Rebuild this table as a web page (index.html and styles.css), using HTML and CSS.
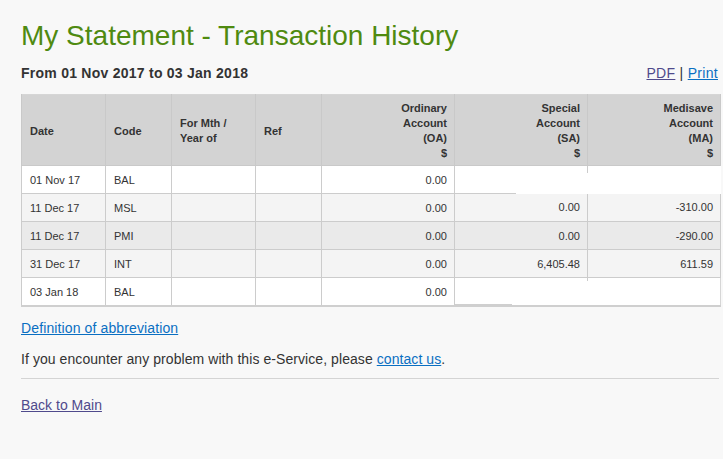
FILE: index.html
```html
<!DOCTYPE html>
<html>
<head>
<meta charset="utf-8">
<link rel="stylesheet" href="styles.css">
</head>
<body>
<div class="page">
  <h1 class="title">My Statement - Transaction History</h1>
  <div class="subbar">
    <h2 class="period">From 01 Nov 2017 to 03 Jan 2018</h2>
    <div class="tools"><a href="#" class="visited">PDF</a> | <a href="#">Print</a></div>
  </div>
  <table class="stmt">
    <colgroup>
      <col class="c-date"><col class="c-code"><col class="c-mth"><col class="c-ref"><col class="c-oa"><col class="c-sa"><col class="c-ma">
    </colgroup>
    <thead>
      <tr>
        <th>Date</th>
        <th>Code</th>
        <th>For Mth / Year of</th>
        <th>Ref</th>
        <th class="num">Ordinary<br>Account<br>(OA)<br>$</th>
        <th class="num">Special<br>Account<br>(SA)<br>$</th>
        <th class="num">Medisave<br>Account<br>(MA)<br>$</th>
      </tr>
    </thead>
    <tbody>
      <tr class="r-white">
        <td>01 Nov 17</td><td>BAL</td><td></td><td></td><td class="num">0.00</td><td class="blank blank-top" colspan="2"></td>
      </tr>
      <tr class="r-light">
        <td>11 Dec 17</td><td>MSL</td><td></td><td></td><td class="num">0.00</td><td class="num">0.00</td><td class="num">-310.00</td>
      </tr>
      <tr class="r-mid">
        <td>11 Dec 17</td><td>PMI</td><td></td><td></td><td class="num">0.00</td><td class="num">0.00</td><td class="num">-290.00</td>
      </tr>
      <tr class="r-light">
        <td>31 Dec 17</td><td>INT</td><td></td><td></td><td class="num">0.00</td><td class="num">6,405.48</td><td class="num">611.59</td>
      </tr>
      <tr class="r-white">
        <td>03 Jan 18</td><td>BAL</td><td></td><td></td><td class="num">0.00</td><td class="blank blank-bottom" colspan="2"></td>
      </tr>
    </tbody>
  </table>
  <p class="defn"><a href="#">Definition of abbreviation</a></p>
  <p class="help">If you encounter any problem with this e-Service, please <a href="#">contact us</a>.</p>
  <hr class="rule">
  <p class="back"><a href="#" class="visited">Back to Main</a></p>
</div>
</body>
</html>
```
FILE: styles.css
```css
html, body {
  margin: 0;
  padding: 0;
  background: #f8f8f8;
}
body {
  font-family: "Liberation Sans", Arial, sans-serif;
  color: #333333;
}
.page {
  padding: 20px 2px 0 21px;
  width: 700px;
}
.title {
  margin: 0;
  font-size: 28px;
  font-weight: normal;
  line-height: 32px;
  color: #4f8a10;
}
.subbar {
  display: flex;
  justify-content: space-between;
  align-items: baseline;
  margin-top: 13px;
  height: 29px;
}
.period {
  margin: 0;
  font-size: 14px;
  line-height: 16px;
  font-weight: bold;
  letter-spacing: 0.25px;
  color: #333333;
}
.tools {
  font-size: 14px;
  line-height: 16px;
  letter-spacing: 0.3px;
  color: #333333;
  padding-right: 3px;
}
a {
  color: #0a6fc2;
}
a.visited {
  color: #4f4a8c;
}
.stmt {
  width: 699px;
  table-layout: fixed;
  border-collapse: collapse;
  font-size: 11px;
  border-left: 1px solid #cccccc;
  border-right: 1px solid #d6d6d6;
  border-top: 1px solid #d6d6d6;
  border-bottom: 2px solid #cfcfcf;
}
.c-date { width: 84px; }
.c-code { width: 66px; }
.c-mth { width: 84px; }
.c-ref { width: 66px; }
.c-oa { width: 133px; }
.c-sa { width: 133px; }
.c-ma { width: 133px; }
.stmt th {
  background: #d3d3d3;
  font-weight: bold;
  text-align: left;
  vertical-align: middle;
  height: 60px;
  padding: 6px 7px 4px 8px;
  line-height: 15px;
  border: 1px solid #c9c9c9;
  border-top: none;
  color: #333333;
}
.stmt th.lbl {
  padding-bottom: 6px;
}
.stmt td {
  height: 27px;
  padding: 0 7px 0 8px;
  border: 1px solid #cccccc;
  color: #333333;
  vertical-align: middle;
}
.stmt .num {
  text-align: right;
}
.r-white td { background: #ffffff; }
.r-light td { background: #f4f4f4; }
.r-mid td { background: #eaeaea; }
.stmt td.blank {
  border-right-style: hidden;
  border-bottom-style: hidden;
}
.stmt td.blank-top {
  background:
    linear-gradient(#cccccc, #cccccc) no-repeat 132px 0 / 1px 7px,
    linear-gradient(#cccccc, #cccccc) no-repeat 0 100% / 61px 1px,
    #ffffff;
}
.stmt td.blank-bottom {
  border-right-style: solid;
  border-right-color: #d6d6d6;
  border-bottom: 1px solid #dedede;
  background:
    linear-gradient(#cccccc, #cccccc) no-repeat 132px 0 / 1px 3px,
    linear-gradient(#cfcfcf, #cfcfcf) no-repeat 0 100% / 57px 1px,
    #ffffff;
}
.defn {
  margin: 13px 0 0;
  font-size: 14px;
  line-height: 16px;
  letter-spacing: 0.12px;
}
.help {
  margin: 15px 0 0;
  font-size: 14px;
  line-height: 16px;
  letter-spacing: 0.07px;
}
.rule {
  margin: 11px 0 0;
  border: none;
  border-top: 1px solid #d4d4d4;
  width: 698px;
}
.back {
  margin: 18px 0 0;
  font-size: 14px;
  line-height: 16px;
}
```
